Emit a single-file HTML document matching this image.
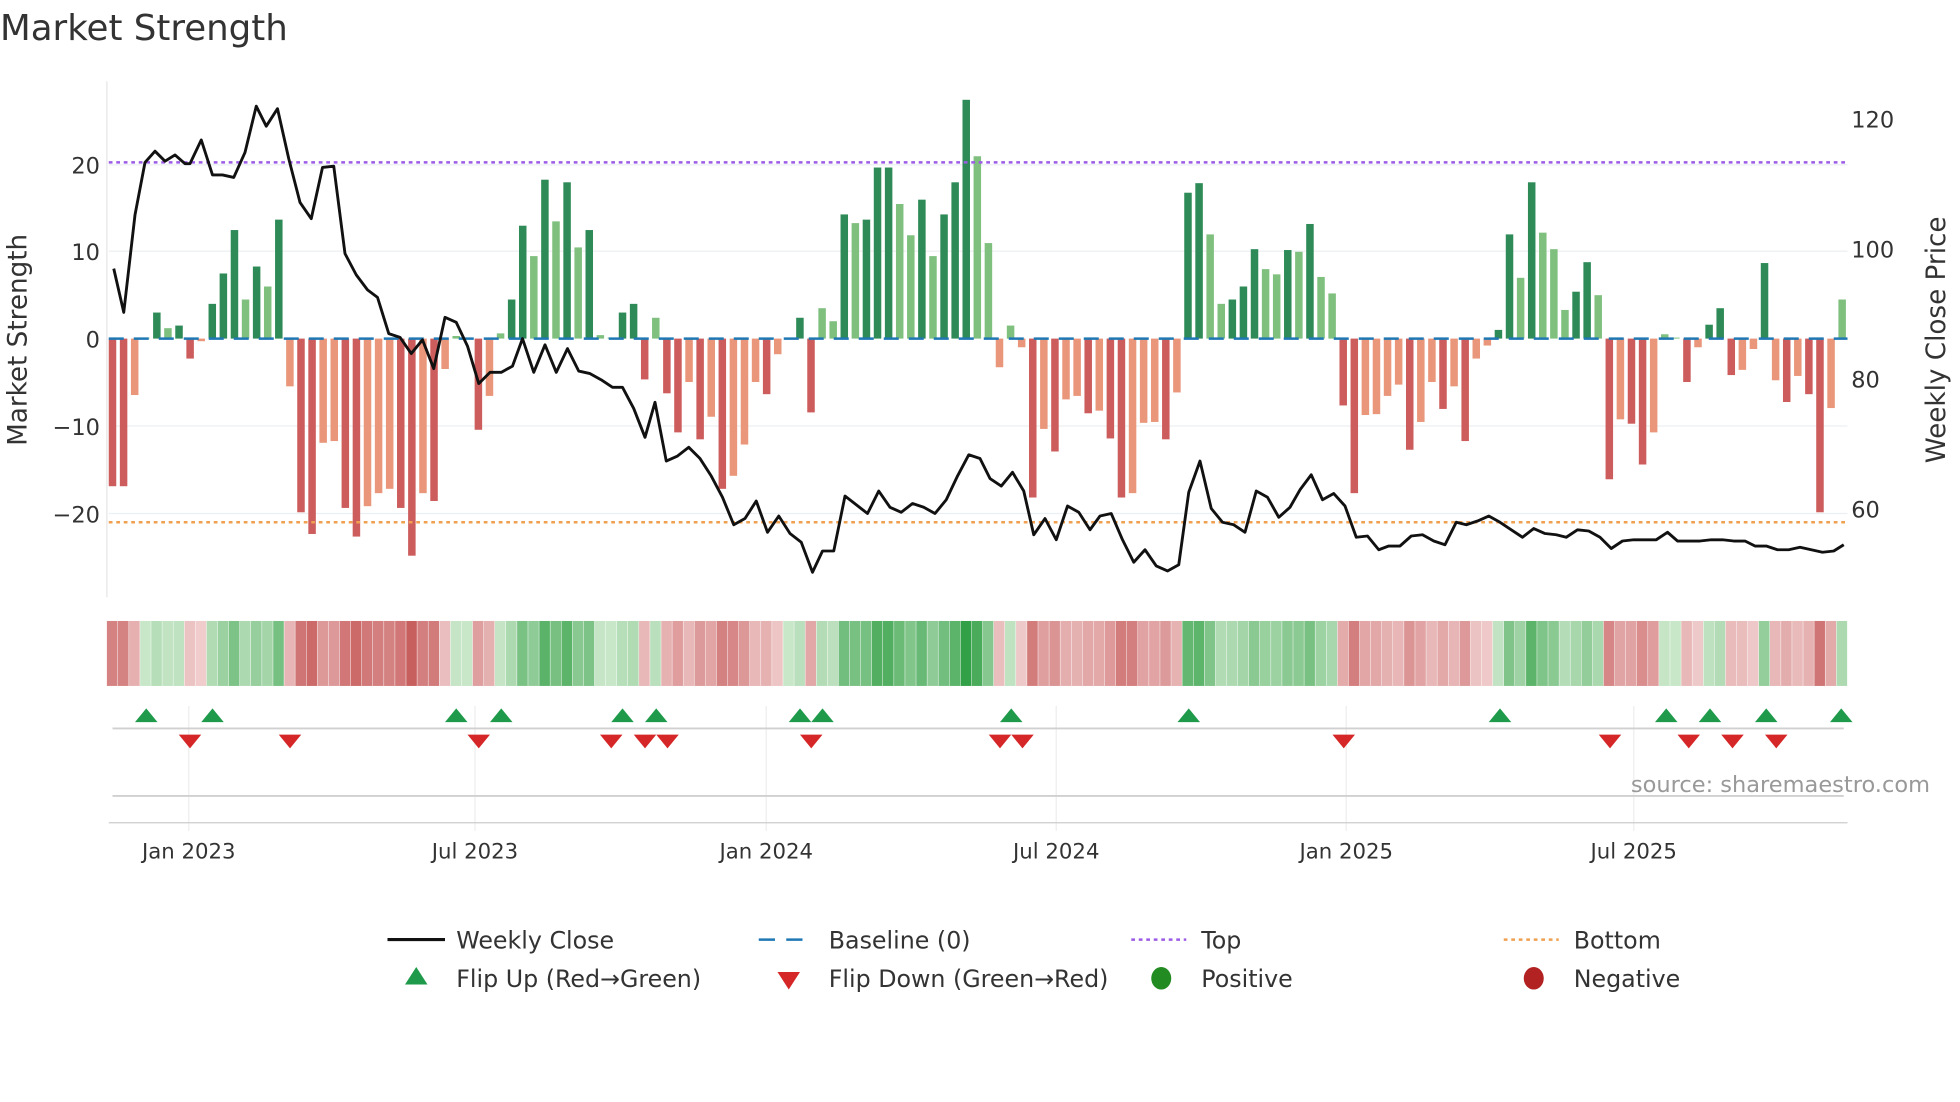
<!DOCTYPE html>
<html><head><meta charset="utf-8">
<style>
html,body{margin:0;padding:0;background:#fff;}
svg{display:block;font-family:"DejaVu Sans","Liberation Sans",sans-serif;}
</style></head>
<body>
<svg id="c" width="1960" height="1102" viewBox="0 0 1568 882" preserveAspectRatio="none" xmlns="http://www.w3.org/2000/svg">
<rect width="1568" height="882" fill="#fff"/>
<text x="0" y="32" font-size="28.5" fill="#333">Market Strength</text>
<g stroke="#eceff1" stroke-width="1">
<line x1="87" y1="132" x2="1478" y2="132"/><line x1="87" y1="201" x2="1478" y2="201"/>
<line x1="87" y1="341" x2="1478" y2="341"/><line x1="87" y1="411" x2="1478" y2="411"/>
</g>
<line x1="85.5" y1="65" x2="85.5" y2="478" stroke="#e6e6e6"/>
<g font-size="18" fill="#333" text-anchor="end">
<text x="80" y="139">20</text><text x="80" y="208">10</text><text x="80" y="278">0</text>
<text x="80" y="348">−10</text><text x="80" y="418">−20</text>
</g>
<g font-size="18" fill="#333">
<text x="1481" y="102">120</text><text x="1481" y="206">100</text><text x="1481" y="310">80</text><text x="1481" y="414">60</text>
</g>
<text transform="translate(21,272) rotate(-90)" font-size="21" fill="#333" text-anchor="middle">Market Strength</text>
<text transform="translate(1556,272) rotate(-90)" font-size="21" fill="#333" text-anchor="middle">Weekly Close Price</text>
<g id="bars"></g>
<line x1="87" y1="271" x2="1478" y2="271" stroke="#1f77b4" stroke-width="2" stroke-dasharray="12,8"/>
<line x1="87" y1="130" x2="1478" y2="130" stroke="#9d5ce6" stroke-width="2" stroke-dasharray="3,3"/>
<line x1="87" y1="418" x2="1478" y2="418" stroke="#f0a050" stroke-width="2" stroke-dasharray="3,3"/>
<polyline id="price" fill="none" stroke="#111" stroke-width="2.3" stroke-linejoin="round"/>
<g id="heat"></g>
<g id="vgrid" stroke="#eeeeee"></g>
<line x1="90" y1="583" x2="1475" y2="583" stroke="#d0d0d0" stroke-width="1.5"/>
<line x1="90" y1="637" x2="1475" y2="637" stroke="#d0d0d0" stroke-width="1.5"/>
<line x1="87" y1="658.5" x2="1478" y2="658.5" stroke="#ccc"/>
<g id="marks"></g>
<text x="1544" y="634" font-size="18" fill="#999" text-anchor="end">source: sharemaestro.com</text>
<g font-size="17" fill="#333" text-anchor="middle">
<text x="151" y="687">Jan 2023</text><text x="380" y="687">Jul 2023</text><text x="613" y="687">Jan 2024</text>
<text x="845" y="687">Jul 2024</text><text x="1077" y="687">Jan 2025</text><text x="1307" y="687">Jul 2025</text>
</g>
<g font-size="19" fill="#333">
<line x1="310" y1="752" x2="356" y2="752" stroke="#111" stroke-width="2.5"/><text x="365" y="759">Weekly Close</text>
<line x1="607" y1="752" x2="651" y2="752" stroke="#1f77b4" stroke-width="2" stroke-dasharray="13,9"/><text x="663" y="759">Baseline (0)</text>
<line x1="905" y1="752" x2="949" y2="752" stroke="#9d5ce6" stroke-width="2" stroke-dasharray="3,3"/><text x="961" y="759">Top</text>
<line x1="1203" y1="752" x2="1247" y2="752" stroke="#f0a050" stroke-width="2" stroke-dasharray="3,3"/><text x="1259" y="759">Bottom</text>
<polygon points="324,788 342,788 333,774" fill="#1e9a4a"/><text x="365" y="790">Flip Up (Red→Green)</text>
<polygon points="622,778 640,778 631,792" fill="#d62728"/><text x="663" y="790">Flip Down (Green→Red)</text>
<ellipse cx="929" cy="783" rx="8" ry="9" fill="#228b22"/><text x="961" y="790">Positive</text>
<ellipse cx="1227" cy="783" rx="8" ry="9" fill="#b22222"/><text x="1259" y="790">Negative</text>
</g>
</svg>
<script>
var v=[-17,-17,-6.5,0,3,1.2,1.5,-2.3,-0.3,4,7.5,12.5,4.5,8.3,6,13.7,-5.5,-20,-22.5,-12,-11.8,-19.5,-22.8,-19.3,-17.8,-17.3,-19.5,-25,-17.8,-18.7,-3.5,0.3,0,-10.5,-6.6,0.6,4.5,13,9.5,18.3,13.5,18,10.5,12.5,0.4,0,3,4,-4.7,2.4,-6.3,-10.8,-5,-11.6,-9,-17.3,-15.8,-12.2,-5,-6.4,-1.8,0,2.4,-8.5,3.5,2,14.3,13.3,13.7,19.7,19.7,15.5,11.9,16,9.5,14.3,18,27.5,21,11,-3.3,1.5,-1,-18.3,-10.4,-13,-7,-6.6,-8.6,-8.3,-11.5,-18.3,-17.8,-9.7,-9.6,-11.6,-6.2,16.8,17.9,12,4,4.5,6,10.3,8,7.4,10.2,10,13.2,7.1,5.2,-7.7,-17.8,-8.8,-8.7,-6.6,-5.3,-12.8,-9.6,-5,-8.1,-5.5,-11.8,-2.3,-0.8,1,12,7,18,12.2,10.3,3.3,5.4,8.8,5,-16.2,-9.3,-9.8,-14.5,-10.8,0.5,0,-5,-1,1.6,3.5,-4.2,-3.6,-1.2,8.7,-4.8,-7.3,-4.3,-6.4,-20,-8,4.5];
var NS="http://www.w3.org/2000/svg";
function el(p,t,a){var e=document.createElementNS(NS,t);for(var k in a)e.setAttribute(k,a[k]);p.appendChild(e);return e;}
var bars=document.getElementById('bars'),heat=document.getElementById('heat');
for(var i=0;i<v.length;i++){
 var x=90+i*8.87,val=v[i],prev=i?v[i-1]:0,dark=Math.abs(val)>=Math.abs(prev);
 var col=val>=0?(dark?'#2e8b57':'#7fc07f'):(dark?'#cd5c5c':'#e9967a');
 var h=Math.abs(val)*6.95;if(h<0.8)h=0.8;
 el(bars,'rect',{x:x-3,y:val>=0?271-h:271,width:6,height:h,fill:col});
 var t=Math.min(1,Math.abs(val)/25),c;
 if(val>=0){c='rgb('+Math.round(200-150*t)+','+Math.round(230-70*t)+','+Math.round(200-130*t)+')';}
 else{c='rgb('+Math.round(240-40*t)+','+Math.round(205-110*t)+','+Math.round(205-110*t)+')';}
 el(heat,'rect',{x:x-4.5,y:497,width:9.2,height:52,fill:c});
 el(heat,'line',{x1:x+4.4,y1:497,x2:x+4.4,y2:549,stroke:'#fff','stroke-width':0.8});
}
var p=[91,215,99,250,108,172,116,130,124,121,132,129,140,124,148,131,152,131,161,112,170,140,178,140,187,142,196,122,205,85,213,101,222,87,231,127,240,162,249,175,258,134,267,133,276,203,285,220,294,232,302,238,311,267,320,270,329,283,338,272,347,295,356,254,365,258,374,277,383,307,392,298,401,298,410,293,418,271,427,298,436,276,445,298,454,279,463,297,472,299,481,304,490,310,498,310,507,327,516,350,524,322,533,369,542,365,551,358,560,367,569,381,578,398,587,420,596,415,605,401,614,426,623,413,632,427,641,434,650,458,658,441,667,441,676,397,685,404,694,411,703,393,712,406,721,410,730,403,739,406,748,411,757,400,766,381,775,364,784,367,792,383,801,389,810,378,819,393,827,428,836,415,845,432,854,405,863,410,872,424,880,413,889,411,898,432,907,450,916,440,925,453,934,457,943,452,951,394,960,369,969,407,978,418,987,420,996,426,1005,393,1014,398,1023,414,1032,406,1040,392,1049,380,1058,400,1067,395,1076,405,1085,430,1094,429,1103,440,1111,437,1120,437,1129,429,1138,428,1147,433,1156,436,1165,418,1173,420,1182,417,1191,413,1200,418,1209,424,1218,430,1227,423,1236,427,1245,428,1253,430,1262,424,1271,425,1280,430,1289,439,1298,433,1307,432,1316,432,1325,432,1334,426,1342,433,1351,433,1360,433,1369,432,1378,432,1387,433,1396,433,1404,437,1413,437,1422,440,1431,440,1440,438,1449,440,1458,442,1467,441,1475,436];
var s=[];for(var j=0;j<p.length;j+=2)s.push(p[j]+','+p[j+1]);
document.getElementById('price').setAttribute('points',s.join(' '));
var vg=document.getElementById('vgrid');
[151,380,613,845,1077,1307].forEach(function(x){el(vg,'line',{x1:x,y1:565,x2:x,y2:665});});
var m=document.getElementById('marks');
[117,170,365,401,498,525,640,658,809,951,1200,1333,1368,1413,1473].forEach(function(x){el(m,'polygon',{points:(x-9)+',578 '+(x+9)+',578 '+x+',567',fill:'#1e9a4a'});});
[152,232,383,489,516,534,649,800,818,1075,1288,1351,1386,1421].forEach(function(x){el(m,'polygon',{points:(x-9)+',588 '+(x+9)+',588 '+x+',599',fill:'#d62728'});});
</script>
</body></html>
